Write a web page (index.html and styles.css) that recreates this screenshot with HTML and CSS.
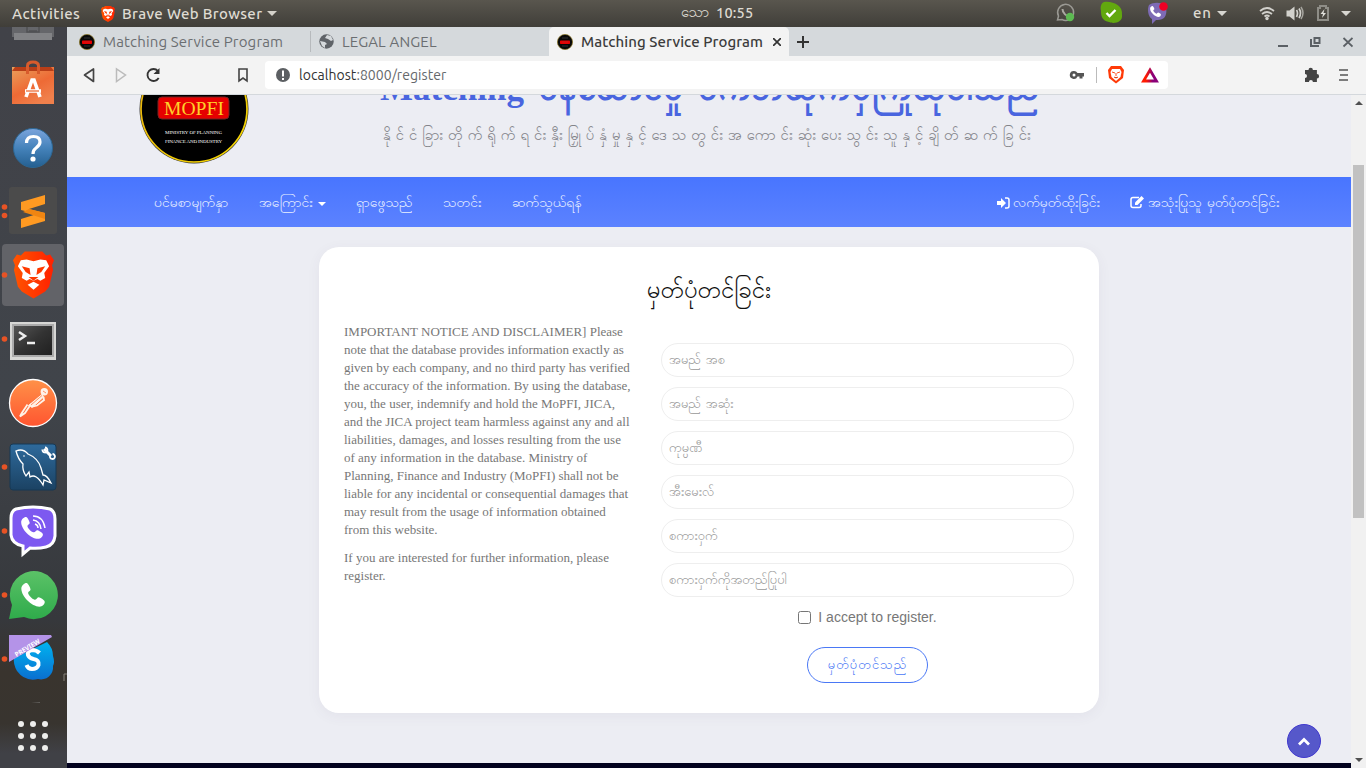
FILE: index.html
```html
<!DOCTYPE html>
<html lang="my">
<head>
<meta charset="utf-8">
<title>Matching Service Program</title>
<link rel="stylesheet" href="styles.css">
</head>
<body>
<svg class="defs" width="0" height="0" aria-hidden="true">
  <defs>
    <linearGradient id="brave" x1="0" x2="1"><stop offset="0" stop-color="#ff5500"/><stop offset="1" stop-color="#ff2000"/></linearGradient>
    <linearGradient id="bag" x1="0" y1="0" x2=".6" y2="1"><stop offset="0" stop-color="#e9a05c"/><stop offset=".6" stop-color="#ee6a35"/><stop offset="1" stop-color="#f0804c"/></linearGradient>
    <linearGradient id="help" x2="0" y2="1"><stop offset="0" stop-color="#7ba4dc"/><stop offset=".5" stop-color="#4583bb"/><stop offset="1" stop-color="#245f90"/></linearGradient>
    <linearGradient id="term" x2="1" y2="1"><stop offset="0" stop-color="#555"/><stop offset=".5" stop-color="#333"/><stop offset="1" stop-color="#202020"/></linearGradient>
    <linearGradient id="post" x2="0" y2="1"><stop offset="0" stop-color="#ff9148"/><stop offset="1" stop-color="#ff5530"/></linearGradient>
    <linearGradient id="sql" x2="0" y2="1"><stop offset="0" stop-color="#2e6a9c"/><stop offset="1" stop-color="#1b4263"/></linearGradient>
    <linearGradient id="wa" x2="0" y2="1"><stop offset="0" stop-color="#5bc267"/><stop offset="1" stop-color="#2fab4b"/></linearGradient>
    <linearGradient id="sky" x2="0" y2="1"><stop offset="0" stop-color="#00b3f0"/><stop offset="1" stop-color="#0a6fd0"/></linearGradient>
    <linearGradient id="bat" x2="1"><stop offset=".2" stop-color="#ff1b00"/><stop offset=".7" stop-color="#8b0078"/></linearGradient>
    <linearGradient id="gold" x2="1" y2="1"><stop offset="0" stop-color="#e8b010"/><stop offset="1" stop-color="#f5d800"/></linearGradient>
    <symbol id="lion" viewBox="0 0 42 48"><path d="M12 0h18l4 4 4-1 4 6-2 5 1 5-4 17-4 5-12 7-12-7-4-5L1 19l1-5L0 9l4-6 4 1z" fill="url(#brave)"/><path d="M14 8l7 2 7-2 6 1 3 6-5 7 1 5-5 3 -3-2 -4 2 -4-2 -3 2 -5-3 1-5 -5-7 3-6z" fill="#fff"/><path d="M15 34l6-3 6 3-6 5z" fill="#fff"/><path d="M9 15l8 2 1 7-5-3zM33 15l-8 2-1 7 5-3zM16 26h10l-5 4z" fill="#ff3a00"/></symbol>
    <symbol id="phone" viewBox="0 0 24 24"><path d="M6.600 1.800C5 1.500 2 4 2 6.500c0 7 9 15.500 15.500 15.500 2.500 0 5-2.500 4.500-4.500-.2-1-4-3.500-5-3.500-1.500 0-2 2.300-3.500 2C11 15.500 8 12 7.800 10.300 7.600 9 10 8.500 9.900 7.300 9.800 6 7.800 2 6.600 1.800z" fill="#fff"/></symbol>
    <symbol id="fav" viewBox="0 0 16 16"><circle cx="8" cy="8" r="7.600" fill="#080808" stroke="#8b7623" stroke-width=".7"/><rect x="3" y="6.500" width="10" height="3.500" rx=".7" fill="#e80000"/><path d="M5 8h6" stroke="#b22" stroke-width=".7"/><path d="M5 4h6M5 12h6" stroke="#444" stroke-width=".7"/></symbol>
  </defs>
</svg>
<div class="desktop">
  <header class="topbar">
    <div class="top-left">
      <span class="activities">Activities</span>
      <svg class="mini-lion" viewBox="0 0 42 48"><use href="#lion"/></svg>
      <span class="appname">Brave Web Browser</span><i class="tri"></i>
    </div>
    <div class="clock"><span class="my day">သော</span><span class="time">10:55</span></div>
    <svg class="tray" width="320" height="27" viewBox="1046 0 320 27">
      <path d="M1057.500 20l1-4a8 8 0 1 1 3.500 3.500z" fill="none" stroke="#9a9993" stroke-width="1.500"/><path d="M1062.500 9c0 4 4 8 8 7" fill="none" stroke="#aaa9a2" stroke-width="2"/><circle cx="1070" cy="17" r="4.200" fill="#5dba52"/>
      <path d="M1104 2c10-1 19 4 18 13 1 8-9 9-13 7-8-1-8-8-8-11-1-4 0-8 3-9z" fill="#62a80f"/><path d="M1106.500 13l3 3 6-6" fill="none" stroke="#fff" stroke-width="2.400"/>
      <path d="M1149 5c4-3 12-3 16 0 2 4 2 10-1 13-3 2-6 2-8 2l-4 4v-5c-4-2-5-10-3-14z" fill="#7d6bb5"/><use href="#phone" x="1149" y="5" width="13" height="13"/><circle cx="1163.500" cy="6.500" r="4.300" fill="#f00024"/>
      <text class="tray-text" x="1193" y="18" textLength="18">en</text><path d="M1217 11h10l-5 5zM1341 11h10l-5 5z" fill="#d7d6d1"/>
      <g fill="none" stroke="#d2d1cc" stroke-width="1.700"><path d="M1260 11q7-6 14 0M1262 14q5-4 10 0M1264.500 16.500q2.500-2 5 0"/><path d="M1296.500 10q2 3 0 7M1299 8.500q3 4.500 0 9.500"/></g><circle cx="1267" cy="18.500" r="1.700" fill="#d2d1cc"/><path d="M1286.500 10.500h3l5-4v14l-5-4h-3z" fill="#d2d1cc"/><path d="M1301 7q4 6 0 12" fill="none" stroke="#a4a39d" stroke-width="1.500"/>
      <path d="M1318 8h2V6h6v2h2v12h-10z" fill="none" stroke="#8e8d87" stroke-width="2"/><path d="M1324.500 9l-4 5h2.500l-1 4 4-5h-2.500z" fill="#e0dfda"/>
    </svg>
  </header>

  <div class="workspace">
    <nav class="dock">
      <svg width="67" height="741" viewBox="0 27 67 741">
        <path d="M12 27h42v10H12z" fill="#65666a"/><path d="M14 33h38v7H14z" fill="#828386"/><path d="M27 27v5h12v-5M29 31h8" fill="none" stroke="#505154" stroke-width="1.500"/>
        <path d="M12 67h42v37H12z" fill="url(#bag)"/><path d="M12 71l3-4h36l3 4z" fill="#b83e18"/><path d="M27.500 74V66q0-4 5.500-4t5.500 4v8" fill="none" stroke="#d85b2c" stroke-width="3"/><path d="M26 97l6-17h2l6 17M25 91h16" fill="none" stroke="#fff" stroke-width="3.600"/><path d="M26 91h13" stroke="#ed6b35" stroke-width="1.300"/>
        <circle cx="33" cy="148" r="19.500" fill="url(#help)" stroke="#2c6794"/><path d="M26.500 143q0-6.500 7-6.500 6.500 0 6.500 5.500 0 3-4 6-3 2-3 6" fill="none" stroke="#fff" stroke-width="3.200"/><circle cx="33" cy="159" r="2.600" fill="#fff"/>
        <rect x="9" y="187" width="48" height="47" rx="3" fill="#4b4b4b"/><path d="M21 202l24-7v9l-16 5 16 4v8l-24 7v-9l16-5-16-4z" fill="#ff9a22"/><path d="M29 209l16 4v6l-22-7z" fill="#ef8512"/>
        <rect x="2" y="244" width="62" height="62" rx="4" fill="#626368"/><use href="#lion" x="13" y="251" width="41" height="48"/>
        <path d="M10 322h46v38H10z" fill="#d7d7d5"/><path d="M12 324h42v33H12z" fill="#aaa"/><path d="M14 326h38v29H14z" fill="url(#term)"/><path d="M19 332l6 4-6 4M27 343h8" fill="none" stroke="#eee" stroke-width="2.500"/>
        <circle cx="33" cy="403" r="23.500" fill="url(#post)" stroke="#fff" stroke-width="1.300"/><circle cx="44.300" cy="391.700" r="3.700" fill="#fff2e8"/><path d="M42 394.500l1.500 2.500-11 10-4-1.500z" fill="#fff2e8" stroke="#fff2e8"/><path d="M31 404l-6 9-5 3.500 1.500-3 6-9M43.500 397l.5 3-7 5.500-6 1.500" fill="none" stroke="#fff2e8" stroke-width="1.800"/><path d="M31 405l11-9.500M43 391l3 2" stroke="#ff7840" stroke-width=".8"/>
        <rect x="10" y="444" width="46" height="46" rx="3" fill="url(#sql)" stroke="#173955"/><path d="M16 451q7-3 12 3 10 4 13 14l2 7q4 0 8 8l-7-3-1 5q-7-12-13-8l-1-5-3 4q-4-6-3-12-5-5-7-13z" fill="none" stroke="#fff" stroke-width="1.300"/><circle cx="24" cy="456" r=".8" fill="#fff"/><path d="M44 449l7 7" stroke="#fff" stroke-width="3"/><path d="M42.500 449.500a2.500 2.500 0 1 0 2.500-2M52.500 454a2.500 2.500 0 1 1-2.500 2" fill="none" stroke="#fff" stroke-width="1.800"/>
        <path d="M16 509q17-4 34 0 5 2 5 10v17q-1 9-9 11-8 2-16 1l-7 6v-8q-11-2-12-11v-17q0-7 5-9z" fill="#7d59f0" stroke="#fff" stroke-width="3"/><use href="#phone" x="19" y="515" width="26" height="26"/><path d="M33 520q7 1 8 9M33 516q10 0 12 12M35 524q3 1 3 4" fill="none" stroke="#fff" stroke-width="1.500"/>
        <path d="M9 619l3-14a24 24 0 1 1 12 12z" fill="url(#wa)"/><use href="#phone" x="19" y="581" width="28" height="28"/>
        <path d="M14 658L47 642q6 6 6 14 2 6 0 10a12 12 0 0 1-15 13q-13 3-21-8-4-7-3-13z" fill="url(#sky)"/><path d="M39.500 653q-3-3-7.500-3-5 1-4 5 1 3 5.500 4 6 1 5 6-1.500 4-6.500 4-4 0-5.500-4" fill="none" stroke="#fff" stroke-width="4"/><path d="M9 635h42l1 2L9 662z" fill="#b493e8"/><text class="preview" x="16.500" y="657" textLength="28" lengthAdjust="spacingAndGlyphs" transform="rotate(-31 16.500 657)">PREVIEW</text>
        <g fill="#e85325"><circle cx="4.500" cy="207" r="2.800"/><circle cx="4.500" cy="215.500" r="2.800"/><circle cx="4.500" cy="275" r="2.800"/><circle cx="4.500" cy="339" r="2.800"/><circle cx="4.500" cy="467" r="2.800"/><circle cx="4.500" cy="531" r="2.800"/><circle cx="4.500" cy="595" r="2.800"/><circle cx="4.500" cy="659" r="2.800"/></g>
        <path d="M64 681v-7h3" fill="none" stroke="#858079"/><path d="M31 703l9-1v1z" fill="#62605d"/>
        <g fill="#eeeeec"><circle cx="21" cy="724" r="3"/><circle cx="33" cy="724" r="3"/><circle cx="45" cy="724" r="3"/><circle cx="21" cy="736" r="3"/><circle cx="33" cy="736" r="3"/><circle cx="45" cy="736" r="3"/><circle cx="21" cy="748" r="3"/><circle cx="33" cy="748" r="3"/><circle cx="45" cy="748" r="3"/></g>
      </svg>
    </nav>
    <section class="browser">
      <div class="tabs">
        <div class="tab"><svg width="16" height="16"><use href="#fav"/></svg><span>Matching Service Program</span></div>
        <div class="tab second"><svg width="15" height="15" viewBox="0 0 15 15"><circle cx="7.500" cy="7.500" r="7.200" fill="#5f6368"/><path d="M8 1l-2 3 3 1 3 2 2-1-2-4zM1 7l5 1 2 2-2 1v3l-3-2z" fill="#d5d9dc"/></svg><span>LEGAL ANGEL</span></div>
        <div class="tab active"><svg width="16" height="16"><use href="#fav"/></svg><span>Matching Service Program</span><svg class="close" width="8" height="8"><path d="M0 0l8 8M8 0L0 8" stroke="#333" stroke-width="1.700"/></svg></div>
        <svg class="plus" width="12" height="12"><path d="M6 0v12M0 6h12" stroke="#333" stroke-width="2"/></svg>
        <svg class="win" width="76" height="14" viewBox="1277 35 76 14"><path d="M1278 46h10" stroke="#5b6065" stroke-width="2"/><path d="M1314.500 38h5v5h-5zM1311 39v7h8" fill="none" stroke="#5b6065" stroke-width="2"/><path d="M1343.500 38l9 8.500M1352.500 38l-9 8.500" stroke="#5b6065" stroke-width="1.800"/></svg>
      </div>
      <div class="toolbar">
        <svg class="navs" width="198" height="38" viewBox="67 56 198 38"><path d="M93.500 69v12.500L84.500 75z" fill="none" stroke="#444" stroke-width="1.700" stroke-linejoin="round"/><path d="M116.500 69v12.500l9-6.500z" fill="none" stroke="#bbb" stroke-width="1.500"/><path d="M158 71a6 6 0 1 0 .7 7" fill="none" stroke="#333" stroke-width="1.800"/><path d="M159.500 68v6h-6z" fill="#333"/><path d="M239 69h8v12l-4-3-4 3z" fill="none" stroke="#444" stroke-width="1.600"/></svg>
        <div class="address"><svg width="14" height="14" viewBox="0 0 14 14"><circle cx="7" cy="7" r="7" fill="#5c5f63"/><path d="M7 2.500v6M7 10v2" stroke="#fff" stroke-width="2"/></svg><span class="url"><b>localhost</b>:8000/register</span>
          <svg class="addr-icons" width="100" height="28" viewBox="1068 61 100 28"><path d="M1074 71a4 4 0 1 0 3.500 5.500h2v2h3v-2h1.500V73h-6.500a4 4 0 0 0-3.500-2zm0 2.500a1.500 1.500 0 1 1 0 3 1.500 1.500 0 0 1 0-3z" fill="#555" fill-rule="evenodd"/><path d="M1096.500 67v16" stroke="#bbb"/><path d="M1111 66h10l3 4-1 8-7 5.500-7-5.500-1-8z" fill="#ff3a08"/><path d="M1112 69h8l1.500 3-1 5-4.500 4-4.500-4-1-5z" fill="#fff"/><path d="M1112 72l3 1M1120 72l-3 1M1116 73v3M1114 77l2 1 2-1" stroke="#ff4a18"/><path d="M1150 70l6.500 11h-13z" fill="#fff" stroke="url(#bat)" stroke-width="2.800"/></svg>
        </div>
        <svg class="ext" width="50" height="18" viewBox="1303 66 50 18"><path d="M1305 70h3.500a2.200 2.200 0 1 1 4.400 0h4v4a2.200 2.200 0 1 1 0 4.400V82h-4a2 2 0 1 0-4 0H1305v-4a2 2 0 1 0 0-4z" fill="#444"/><path d="M1339 70h9M1340 75h8M1339 80h9" stroke="#555" stroke-width="1.700"/></svg>
      </div>
      <div class="viewport">
        <main class="page">
          <div class="hero">
            <svg class="logo" width="110" height="110" viewBox="0 0 110 110"><circle cx="55" cy="55" r="54.500" fill="#333"/><circle cx="55" cy="55" r="53" fill="#000" stroke="url(#gold)" stroke-width="1.700"/><rect x="19" y="43" width="71" height="22" rx="4" fill="#e60000" stroke="#722"/><text class="mopfi" x="25" y="61" textLength="60" lengthAdjust="spacingAndGlyphs">MOPFI</text><text class="ministry" x="26" y="80" textLength="57">MINISTRY OF PLANNING</text><text class="ministry" x="26" y="89" textLength="57">FINANCE AND INDUSTRY</text></svg>
            <div class="headline">
              <h1 class="my"><span class="latin">Matching</span> ဝန်ဆောင်မှု ဝက်ဘ်ဆိုက်မှကြိုဆိုပါသည်</h1>
              <p class="my">နိုင်ငံခြားတိုက်ရိုက်ရင်းနှီးမြှုပ်နှံမှုနှင့်ဒေသတွင်းအကောင်းဆုံးပေးသွင်းသူနှင့်ချိတ်ဆက်ခြင်း</p>
            </div>
          </div>
          <nav class="menu my">
            <a class="m1">ပင်မစာမျက်နှာ</a><a class="m2">အကြောင်း <i class="caret"></i></a><a class="m3">ရှာဖွေသည်</a><a class="m4">သတင်း</a><a class="m5">ဆက်သွယ်ရန်</a>
            <a class="login"><svg width="13" height="12" viewBox="0 0 13 12"><path d="M0 4h4V1l5 5-5 5V8H0z" fill="#fff"/><path d="M8 1h2q2 0 2 2v6q0 2-2 2H8" fill="none" stroke="#fff" stroke-width="1.500"/></svg> လက်မှတ်ထိုးခြင်း</a>
            <a class="signup"><svg width="15" height="13" viewBox="0 0 15 13"><path d="M9 1.500H3q-2 0-2 2v6q0 2 2 2h6q2 0 2-2V8" fill="none" stroke="#fff" stroke-width="1.500"/><path d="M5 9V6.500L11.500 0 14 2.500 7.500 9z" fill="#fff"/></svg> အသုံးပြုသူ မှတ်ပုံတင်ခြင်း</a>
          </nav>
          <section class="card">
            <h2 class="my">မှတ်ပုံတင်ခြင်း</h2>
            <div class="columns">
              <div class="notice"><p>IMPORTANT NOTICE AND DISCLAIMER] Please<br>note that the database provides information exactly as<br>given by each company, and no third party has verified<br>the accuracy of the information. By using the database,<br>you, the user, indemnify and hold the MoPFI, JICA,<br>and the JICA project team harmless against any and all<br>liabilities, damages, and losses resulting from the use<br>of any information in the database. Ministry of<br>Planning, Finance and Industry (MoPFI) shall not be<br>liable for any incidental or consequential damages that<br>may result from the usage of information obtained<br>from this website.</p><p>If you are interested for further information, please<br>register.</p></div>
              <form class="form">
                <div class="field my">အမည် အစ</div>
                <div class="field my">အမည် အဆုံး</div>
                <div class="field my">ကုမ္ပဏီ</div>
                <div class="field my">အီးမေးလ်</div>
                <div class="field my">စကားဝှက်</div>
                <div class="field my">စကားဝှက်ကိုအတည်ပြုပါ</div>
                <label class="accept"><input type="checkbox"><span>I accept to register.</span></label>
                <button type="button" class="submit my">မှတ်ပုံတင်သည်</button>
              </form>
            </div>
          </section>
          <div class="footer"></div>
          <button class="totop" type="button"><svg width="14" height="9"><path d="M2 7.500l5-5 5 5" fill="none" stroke="#fff" stroke-width="2.800"/></svg></button>
        </main>
        <div class="scrollbar"><i class="up"></i><div class="thumb"></div><i class="down"></i></div>
      </div>
    </section>
  </div>
</div>
</body>
</html>
```
FILE: styles.css
```css
* { box-sizing: border-box; }
body { margin: 0; overflow: hidden; font-family: "Liberation Sans", sans-serif; }
svg { display: block; flex: none; }
h1, h2, p { margin: 0; font-weight: 400; }
.defs { position: absolute; }
.my { font-family: Padauk, "Noto Sans Myanmar", "Liberation Sans", "Noto Sans", sans-serif; font-weight: 400; white-space: nowrap; }
.desktop { width: 1366px; height: 768px; overflow: hidden; display: flex; flex-direction: column; }
.topbar { height: 27px; flex: none; display: flex; align-items: center; background: linear-gradient(#59564e, #403e39); color: #dfdbd2; font: 500 15px/27px Ubuntu, "Noto Sans", sans-serif; letter-spacing: .2px; }
.top-left { width: 681px; display: flex; align-items: center; padding-left: 12px; white-space: nowrap; }
.activities { width: 89px; letter-spacing: .45px; }
.mini-lion { width: 14px; height: 16px; }
.appname { margin-left: 7px; width: 141px; letter-spacing: .35px; }
.tri { margin-left: 4px; border: 5px solid transparent; border-top-color: #d5d2ca; border-bottom: 0; }
.clock { display: flex; height: 27px; align-items: center; line-height: 25px; font-size: 14.500px; }
.day { width: 35px; font-size: 15px; }
.time { padding-bottom: 3px; font-weight: 500; }
.tray { margin-left: auto; }
.tray-text { font: 500 15px Ubuntu, "Noto Sans", sans-serif; letter-spacing: 0; fill: #dfdbd2; }
.preview { font: 700 6.500px "Noto Sans", sans-serif; fill: #fff; }
.workspace { flex: 1; display: flex; min-height: 0; }
.dock { width: 67px; flex: none; background: linear-gradient(#414248, #40444a 50%, #36383c 80%, #39342e 87%, #38342f 94%, #404146 98%); }
.browser { width: 1299px; display: flex; flex-direction: column; }
.tabs { height: 29px; flex: none; display: flex; align-items: center; background: #d5d9dc; font: 15px/29px Ubuntu, "Noto Sans", sans-serif; letter-spacing: .15px; color: #6b6e71; white-space: nowrap; }
.tab { width: 243px; height: 29px; display: flex; align-items: center; padding-left: 12px; gap: 8px; }
.tab.second { width: 239px; height: 21px; padding-left: 8px; border-left: 1px solid #b7babd; }
.tab.active { width: 240px; padding-left: 8px; background: #f3f3f3; border-radius: 5px 5px 0 0; color: #3c3c3c; font-weight: 500; letter-spacing: .08px; }
.close { margin-left: auto; margin-right: 8px; }
.plus { margin-left: 8px; }
.win { margin-left: auto; margin-right: 13px; }
.toolbar { height: 39px; flex: none; display: flex; align-items: flex-start; background: #f3f3f3; border-bottom: 1px solid #d4d8dc; }
.address { margin-top: 5px; width: 903px; height: 28px; padding-left: 11px; display: flex; align-items: center; border-radius: 4px; background: #fff; font: 14px/28px Ubuntu, "Noto Sans", sans-serif; letter-spacing: .05px; color: #65686b; }
.url { margin-left: 9px; }
.url b { font-weight: 400; color: #333; }
.addr-icons { margin-left: auto; }
.ext { margin: 10px 13px 0 auto; }
.viewport { flex: 1; min-height: 0; display: flex; }
.page { position: relative; width: 1284px; overflow: hidden; background: #ecedf3; }
.hero { height: 82px; display: flex; align-items: flex-end; padding-left: 72px; }
.logo { margin-bottom: 13px; }
.mopfi { font: 18px "Liberation Serif", serif; fill: #ffd02a; }
.ministry { font: 5px "Liberation Serif", serif; fill: #fff; }
.headline { width: 660px; margin-left: 131px; height: 125px; }
.headline h1 { height: 60px; padding: 7px 0 0; font-weight: 700; font-size: 35px; line-height: 60px; word-spacing: -3.500px; color: #4965df; }
.latin { font-family: "Liberation Serif", serif; }
.headline p { margin-top: 8px; padding-left: 3px; font-size: 15px; line-height: 32px; letter-spacing: 4.950px; color: #83848a; }
.menu { height: 50px; padding: 3px 72px 0 87px; display: flex; align-items: center; background: linear-gradient(#4875ff, #5c82ff); color: #e9f0ff; font-size: 14px; line-height: 47px; }
.menu svg { margin-top: -2px; }
.menu a { flex: none; }
.m1 { width: 75px; margin-right: 30px; }
.m2 { width: 67px; margin-right: 30px; display: flex; align-items: center; justify-content: space-between; }
.m3 { width: 57px; margin-right: 30px; }
.m4 { width: 39px; margin-right: 30px; }
.m5 { width: 70px; }
.caret { border: 4px solid transparent; border-top-color: #fff; border-bottom: 0; }
.login { width: 104px; margin-left: auto; display: flex; align-items: center; gap: 3px; }
.signup { width: 149px; margin-left: 29px; display: flex; align-items: center; gap: 3px; }
.card { width: 780px; height: 466px; margin: 20px auto 0 252px; padding: 25px; background: #fff; border-radius: 20px; box-shadow: 0 3px 14px rgba(80, 60, 100, .06); }
.card h2 { height: 36px; padding-top: 2px; text-align: center; color: #111; font-size: 24px; line-height: 36px; }
.columns { display: flex; margin-top: 15px; }
.notice { width: 317px; color: #777; font: 13px/18px "Liberation Serif", serif; white-space: nowrap; }
.notice p { margin-bottom: 10px; }
.form { width: 413px; padding-top: 20px; display: flex; flex-direction: column; align-items: center; }
.field { width: 413px; height: 34px; flex: none; margin-bottom: 10px; padding: 1px 0 0 7px; border: 1px solid #eee; border-radius: 17px; color: #999; font-size: 13px; line-height: 32px; }
.accept { height: 20px; display: flex; align-items: center; color: #777; font-size: 14px; }
.accept input { width: 13px; height: 13px; margin: 0 7px 0 0; }
.submit { width: 121px; height: 36px; flex: none; margin-top: 20px; padding: 0; border: 1px solid #4a78f5; border-radius: 18px; background: #fff; color: #4a78f5; font-size: 13px; letter-spacing: 1px; }
.footer { height: 5px; margin-top: 50px; background: #02021e; }
.totop { position: absolute; left: 1220px; top: 629px; width: 34px; height: 34px; padding: 0; border: 1px solid #4038ce; border-radius: 50%; background: #5658ca; display: flex; align-items: center; justify-content: center; }
.scrollbar { width: 15px; background: #f1f1f1; display: flex; flex-direction: column; align-items: center; }
.up { margin-top: 6px; border: 4px solid transparent; border-bottom-color: #505050; border-top: 0; }
.thumb { width: 11px; height: 353px; margin-top: 60px; background: #c1c1c1; }
.down { margin-top: auto; margin-bottom: 6px; border: 4px solid transparent; border-top-color: #505050; border-bottom: 0; }
```
